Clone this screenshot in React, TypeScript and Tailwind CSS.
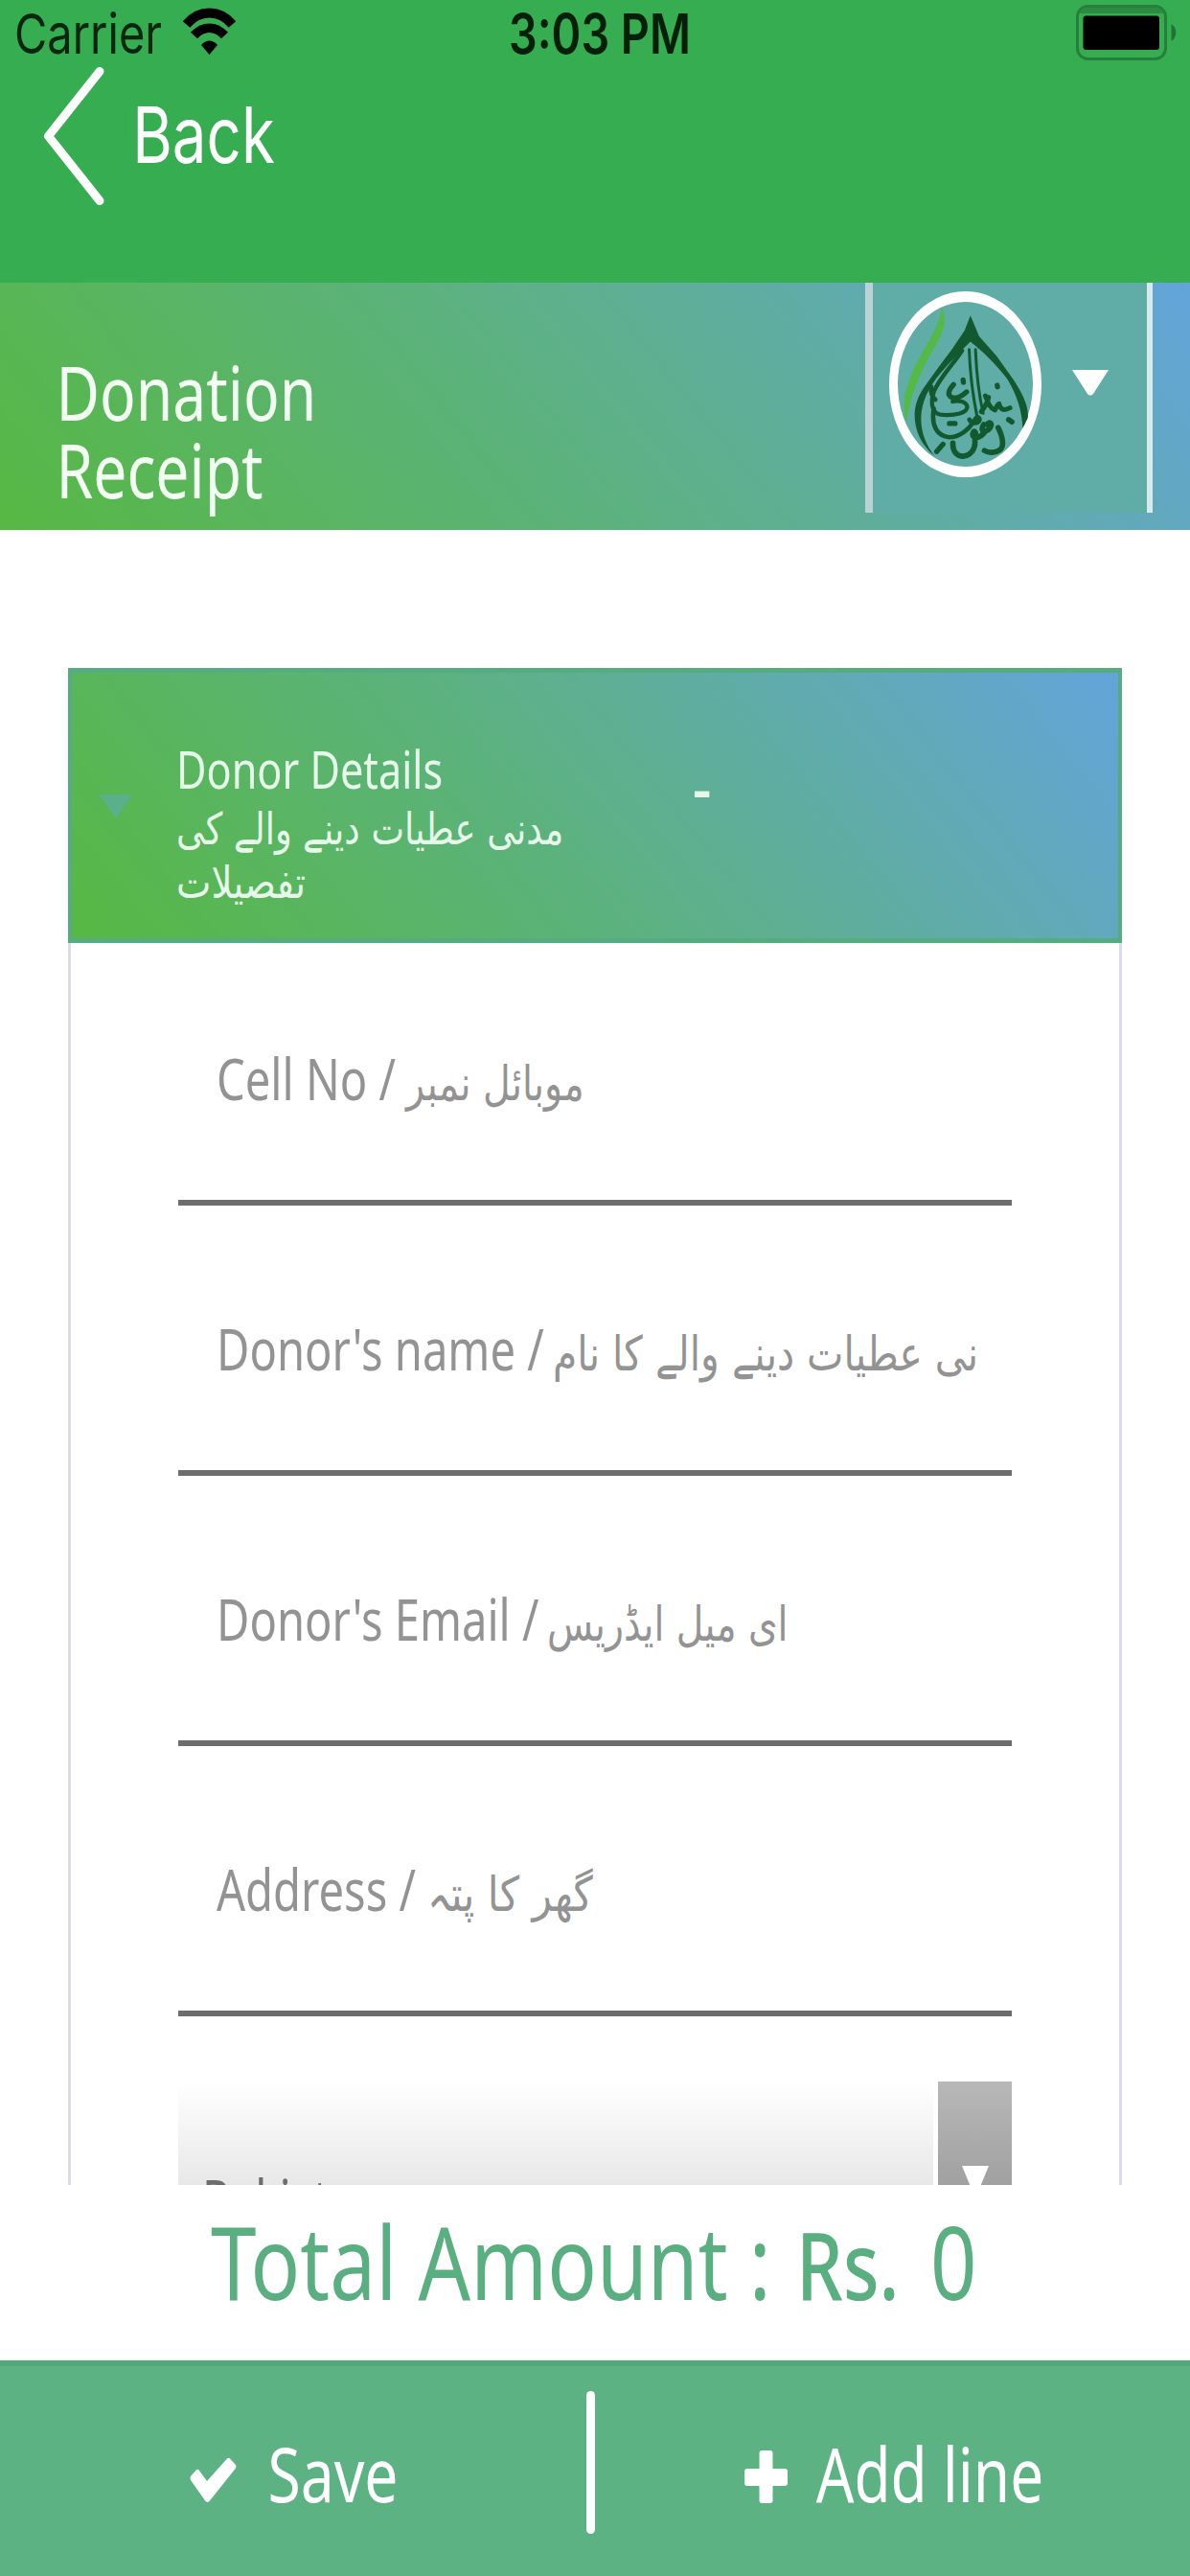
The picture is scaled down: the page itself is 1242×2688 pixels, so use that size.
import React from "react";

interface FieldProps {
	label: string;
	labelWidth: string;
	urdu: string;
	urduScale: string;
}

const fields: FieldProps[] = [
	{ label: "Cell No /", labelWidth: "w-[198px]", urdu: "موبائل نمبر", urduScale: "scale-x-[0.79]" },
	{ label: "Donor's name /", labelWidth: "w-[351px]", urdu: "مدنی عطیات دینے والے کا نام", urduScale: "scale-x-[0.815]" },
	{ label: "Donor's Email /", labelWidth: "w-[345px]", urdu: "ای میل ایڈریس", urduScale: "scale-x-[0.785]" },
	{ label: "Address /", labelWidth: "w-[220px]", urdu: "گھر کا پتہ", urduScale: "scale-x-[0.85]" },
];

const WifiIcon = () => (
	<svg viewBox="0 0 55 49" className="h-[49px] w-[55px]" fill="none" stroke="#000">
		<path d="M3.500 17.500C17 1.500 38 1.500 51.500 17.500" strokeWidth="10" />
		<path d="M11.500 29C21 18.500 34 18.500 43.500 29" strokeWidth="9.500" />
		<path d="M19 39C23.500 33 31.500 33 36 39L27.500 49Z" fill="#000" stroke="none" />
	</svg>
);

const BatteryIcon = () => (
	<svg viewBox="0 0 106 58" className="h-[58px] w-[106px]">
		<rect x="1.500" y="1.500" width="92" height="55" rx="11" fill="none" stroke="#1f7434" strokeOpacity="0.8" strokeWidth="3" />
		<path d="M4 9C6 4 9 3 13 3H82C87 3 90 5 91 9Z" fill="#2b8b41" />
		<rect x="7.500" y="11.500" width="79.500" height="35.500" rx="3" fill="#000" />
		<path d="M99.500 20C106 24 106 34 99.500 38Z" fill="#1f7434" />
	</svg>
);

const Logo = () => (
	<svg viewBox="143 73 478 582" className="h-[194px] w-[159px]" fill="none" stroke="#12592f" strokeLinecap="round" strokeLinejoin="round">
		<path d="M310 122C325 160 318 190 290 240C245 315 208 400 198 482C176 420 200 350 245 268C285 200 300 170 310 122Z" fill="#55b948" stroke="none" />
		{/* drop outline */}
		<path d="M398 148L425 213L480 275L530 345C562 392 582 435 578 470L562 502C560 450 545 400 515 350C490 315 450 272 398 230C370 258 335 292 305 328C265 375 245 420 243 470C243 520 262 560 285 588C245 555 222 510 223 455C226 415 240 390 262 360L300 308L340 254L380 195Z" fill="#12592f" stroke="none" />
		{/* lettering inside the drop */}
		<path d="M372 258C345 300 300 345 283 388C270 428 280 460 312 460C350 462 388 455 388 435C385 418 362 413 342 418" strokeWidth="13" />
		<path d="M275 372C272 395 280 405 288 412" strokeWidth="14" />
		<path d="M345 365C330 382 325 395 337 404C350 412 372 402 386 388" strokeWidth="16" />
		<path d="M394 255C397 330 405 400 420 470M414 255C417 330 425 400 438 455" strokeWidth="9" />
		<path d="M375 350L376 358M482 367L483 372M332 487L350 487M292 575L312 552" strokeWidth="16" />
		<path d="M445 400C455 425 460 440 475 445C482 430 485 425 488 425C490 440 500 450 522 438M455 405C450 425 440 440 432 450" strokeWidth="15" />
		<path d="M283 440C275 490 290 525 330 530C365 530 395 505 412 475C420 460 430 470 425 480C415 490 400 485 395 475" strokeWidth="14" />
		<path d="M343 548C342 575 355 590 375 590C400 588 415 565 412 540C420 520 410 500 405 520C405 535 425 535 440 518" strokeWidth="17" />
		<path d="M440 490C425 510 445 520 460 500C470 485 455 480 450 490M485 500C500 530 505 560 490 570C475 580 455 580 442 572M518 475L528 482" strokeWidth="17" />
	</svg>
);

const CheckIcon = () => (
	<svg viewBox="0 0 49 48" className="mt-[69px] h-[48px] w-[49px]" fill="#fff">
		<path d="M1 20L7 13Q8.500 12 10 14L18 25L39 1.500Q40.500 0 42 1.500L48 8Q49 10 48 11.500L20.500 46Q18.500 48 16.500 46L1 24Q0 22 1 20Z" />
	</svg>
);

const PlusIcon = () => (
	<svg viewBox="0 0 45 55" className="mt-[62px] h-[55px] w-[45px]" fill="#fff">
		<rect x="15.500" y="0" width="14" height="55" rx="3" />
		<rect x="0" y="19" width="45" height="18" rx="3" />
	</svg>
);

const Field: React.FC<FieldProps> = ({ label, labelWidth, urdu, urduScale }) => {
	return (
		<div className="h-[274px] shrink-0 border-b-[6px] border-[#6d6d6d] pt-[101px] pl-[40px] text-[60px] leading-[80px] text-[#939393]">
			<div className="flex w-[792px] items-baseline overflow-hidden whitespace-nowrap">
				<span className={`${labelWidth} shrink-0`}>
					<span className="inline-block origin-left scale-x-[0.785]">{label}</span>
				</span>
				<span lang="ur" className="w-0 font-['DejaVu_Sans',sans-serif] text-[50px]">
					<span className={`inline-block origin-left ${urduScale}`}>{urdu}</span>
				</span>
			</div>
		</div>
	);
};

const App = () => {
	return (
		<div className="flex h-[2688px] w-[1242px] flex-col overflow-hidden bg-white font-['Noto_Sans',sans-serif]">
			<header className="h-[295px] shrink-0 bg-[#37ad51] font-['Inter',sans-serif]">
				<div className="flex h-[70px] justify-between text-[58px] leading-[70px] whitespace-nowrap">
					<div className="flex w-[531px] pl-[15px] text-[#06260f]">
						<span className="w-[176px]">
							<span className="inline-block origin-left scale-x-[0.81]">Carrier</span>
						</span>
						<div className="pt-2">
							<WifiIcon />
						</div>
					</div>
					<div className="w-[200px] font-semibold text-[#04200b]">
						<span className="inline-block origin-left scale-x-[0.805]">3:03 PM</span>
					</div>
					<div className="flex flex-1 justify-end pt-[5px] pr-[13px]">
						<BatteryIcon />
					</div>
				</div>
				<div className="flex h-[143px] items-center pl-[42px] text-white">
					<svg viewBox="0 0 68 148" className="h-[148px] w-[68px]" fill="none" stroke="#fff" strokeWidth="9" strokeLinecap="round" strokeLinejoin="round">
						<path d="M62 6.500L8.500 74L62 141.500" />
					</svg>
					<span className="origin-left scale-x-[0.785] pl-[36px] text-[81px] leading-[143px]">Back</span>
				</div>
			</header>

			<section className="flex h-[258px] shrink-0 justify-between bg-[linear-gradient(51deg,#57b843_0%,#5cb27c_43%,#60aca8_72%,#63a4da_100%)] pr-[39px]">
				<h1 className="w-[300px] origin-left scale-x-[0.8] pt-[74px] pl-[73px] text-[78px] leading-[81px] text-[#f2fff2]">
					Donation Receipt
				</h1>
				<div className="flex h-[240px] w-[300px] border-r-[6px] border-l-[8px] border-r-[#dbe9ec] border-l-[#b9d3d4] bg-[#60ada8]">
					<div className="pt-[9px] pl-[17px]">
						<div className="h-[194px] w-[159px] rounded-[50%] border-x-[9px] border-y-[11px] border-white">
							<div className="-mx-[9px] -my-[11px]">
								<Logo />
							</div>
						</div>
					</div>
					<svg viewBox="0 0 38 27" className="mt-[91px] ml-[32px] h-[27px] w-[38px]" fill="#fff">
						<path d="M0 0H38L22 25Q19 28 16 25Z" />
					</svg>
				</div>
			</section>

			<main className="flex-1 px-[71px] pt-[144px]">
				<div className="flex h-[287px] border-x-4 border-y-[5px] border-[#55ac80] bg-[linear-gradient(51deg,#57b843_0%,#5cb27c_43%,#60aca8_70%,#63a4da_100%)] text-[#e6f8ea]">
					<svg viewBox="0 0 34 25" className="mt-[127px] ml-[29px] h-[25px] w-[34px]" fill="#5bb08c">
						<path d="M0 0H34L17 25Z" />
					</svg>
					<div className="w-[585px] pt-[72px] pl-[46px] text-[55px] leading-[56px] whitespace-nowrap">
						<div className="origin-left scale-x-[0.785]">Donor Details</div>
						<div lang="ur" className="pt-[7px] font-['DejaVu_Sans',sans-serif] text-[46px]">
							<div className="w-0">
								<span className="inline-block origin-left scale-x-[0.8]">مدنی عطیات دینے والے کی</span>
							</div>
							<div className="w-0">
								<span className="inline-block origin-left scale-x-[0.84]">تفصیلات</span>
							</div>
						</div>
					</div>
					<span className="origin-left pt-[90px] text-[60px] leading-[60px] font-semibold">-</span>
				</div>

				<div className="flex h-[1296px] flex-col gap-2 overflow-hidden border-x-[3px] border-[#dcdbee] pr-[112px] pl-[112px]">
					{fields.map((field) => (
						<Field key={field.label} {...field} />
					))}
					<div className="mt-[60px] flex h-[216px] shrink-0 gap-[5px]">
						<div className="w-[788px] bg-linear-to-b from-white via-[#e8e8e8] to-[#d8d8d8] pt-[99px] pl-[25px] text-[60px] leading-[48px] text-[#6d6d6d]">
							<span className="inline-block origin-left scale-x-[0.79]">Pakistan</span>
						</div>
						<div className="flex flex-1 justify-center bg-linear-to-b from-[#b8b8b8] to-[#8a8a8a] pt-[88px]">
							<svg viewBox="0 0 28 34" className="h-[34px] w-[28px]" fill="#fff">
								<path d="M0 0H28L14 34Z" />
							</svg>
						</div>
					</div>
				</div>
			</main>

			<div className="flex h-[183px] shrink-0 pl-[220px] text-[106px] leading-[158px] whitespace-nowrap text-[#5aaf80]">
				<span className="w-[611px]">
					<span className="inline-block origin-left scale-x-[0.807]">Total Amount :</span>
				</span>
				<span className="w-[140px]">
					<span className="inline-block origin-left scale-x-[0.79] text-[98px] font-medium">Rs.</span>
				</span>
				<span className="inline-block origin-left scale-x-[0.8]">0</span>
			</div>

			<footer className="flex h-[225px] shrink-0 border-t-[6px] border-[#52a87b] bg-[#5cb282] pt-[26px] text-[79px] leading-[116px] whitespace-nowrap text-white">
				<div className="flex w-[612px] pl-[198px]">
					<CheckIcon />
					<span className="origin-left scale-x-[0.79] pt-[28px] pl-[41px]">Save</span>
				</div>
				<div className="h-[149px] w-[9px] rounded-full bg-white" />
				<div className="flex pl-[156px]">
					<PlusIcon />
					<span className="origin-left scale-x-[0.785] pt-[28px] pl-[38px]">Add line</span>
				</div>
			</footer>
		</div>
	);
};

export default App;
